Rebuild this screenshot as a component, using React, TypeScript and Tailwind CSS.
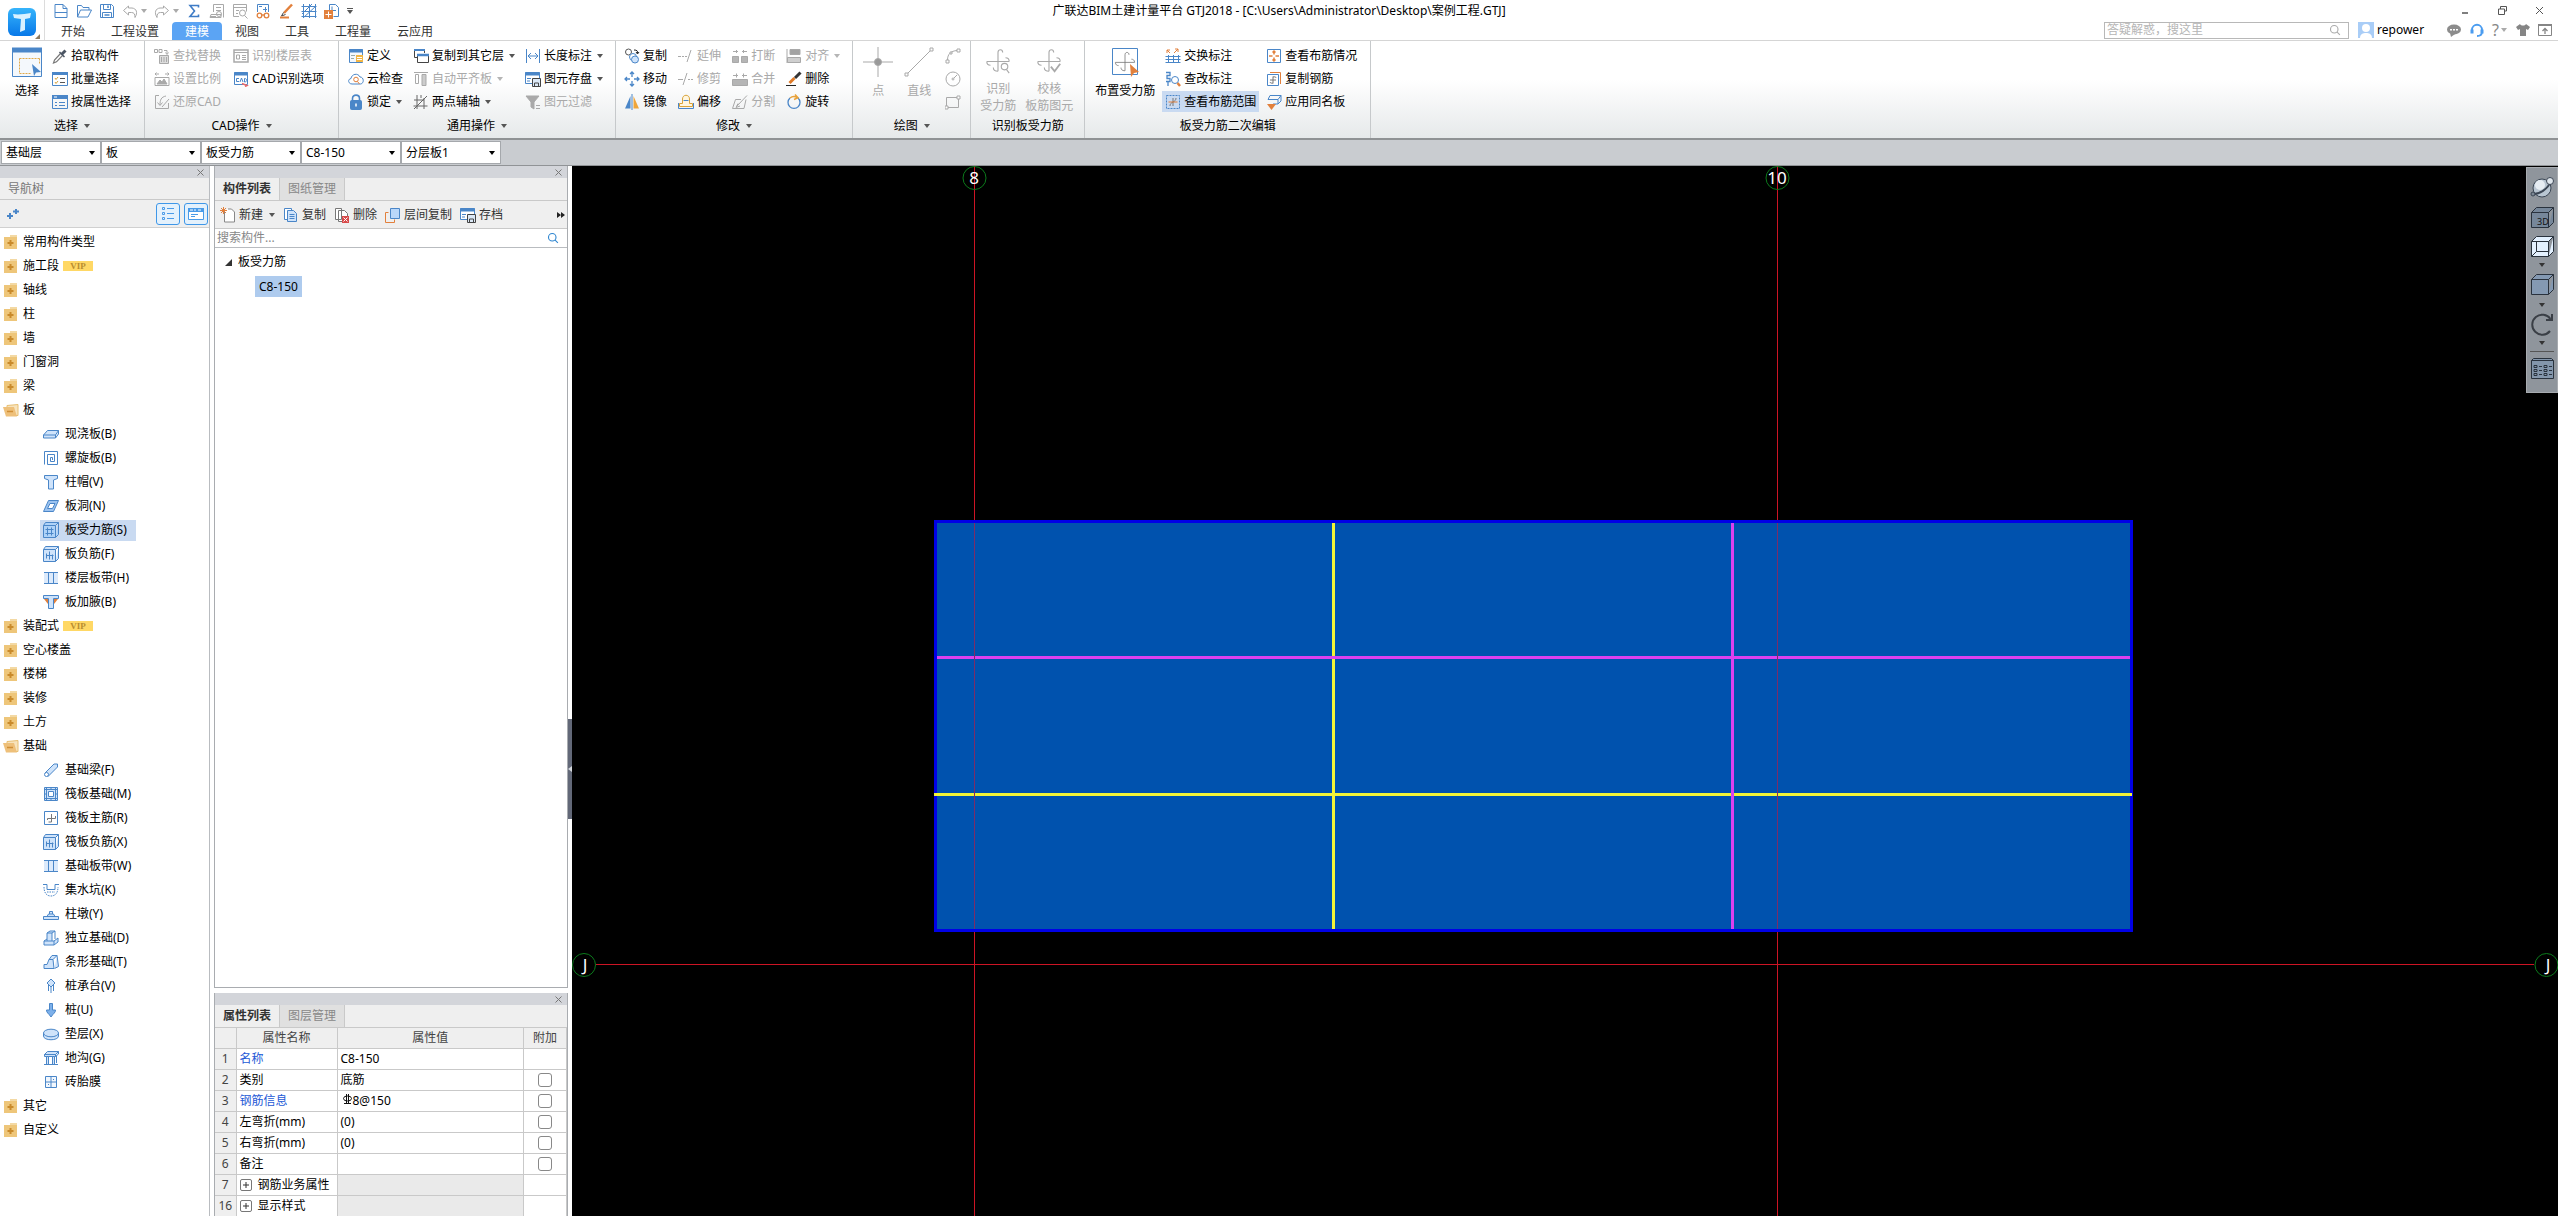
import React from 'react';
import clsx from 'clsx';

const B = '#4a86c8';
const L = '#cfe3fa';
const G = '#a9a9a9';
const O = '#e2803c';
const D = '#444444';

// All small glyphs are drawn on a 16x16 grid
const icons: Record<string, React.ReactNode> = {
  newFile: (
    <g stroke={B}>
      <path d="M2 1.5h8l4 4v9H2zM10 1.5v4h4M2 9.5h12" />
    </g>
  ),
  open: (
    <g stroke={B}>
      <path d="M1.5 14V2.5h4l1.500 2h6v2.500M1.500 14l3-7h11l-3.500 7z" />
    </g>
  ),
  save: (
    <g stroke={B}>
      <path d="M1.500 1.500h11l2 2v11h-13zM4.500 1.500v5h7v-5M3.500 14.500v-5h9v5" />
      <path d="M9 2.500v2.500M5.500 12h5" strokeWidth="1.500" />
    </g>
  ),
  undo: <path stroke={G} d="M6.500 3L1.500 7.500l5 4.500V9.500h3c2.500 0 3.500 1.500 3.500 5 3-5 1.500-9-3-9.500H6.500z" />,
  redo: <path stroke={G} d="M9.500 3l5 4.500-5 4.500V9.500h-3C4 9.500 3 11 3 14.500 0 9.500 1.500 5.500 6 5h3.500z" />,
  sum: <path stroke="#3f7cc6" strokeWidth="1.600" d="M12.500 4.500V2.500H4l4.500 5.500L4 13.500h8.500v-2" />,
  sheetFind: (
    <g stroke={G}>
      <path d="M4.500 9V1.500h10v13M1 13.500h6M7 4.500h5M7 7.500h5M2 11.500h10v3H1z" />
      <circle cx="10" cy="11" r="2.500" />
    </g>
  ),
  tableFind: (
    <g stroke={G}>
      <path d="M7 13.500H1.500v-12h13v7M1.500 4.500h13M4 7.500h3M4 10.500h2" />
      <circle cx="10.500" cy="10" r="3" />
      <path d="M12.500 12.500l3 3" />
    </g>
  ),
  glasses: (
    <g>
      <path stroke={B} d="M2.500 9V1.500h11V9M4 3.500h3M8 6.500h4M10.500 4v5" />
      <g stroke={O} strokeWidth="1.300">
        <circle cx="4.500" cy="12.500" r="2.300" />
        <circle cx="11.500" cy="12.500" r="2.300" />
        <path d="M6.500 12h3" />
      </g>
    </g>
  ),
  pen: (
    <g>
      <path stroke={O} strokeWidth="2.500" d="M14 1.500L6 10" />
      <path stroke={D} d="M5.500 9.500L3.500 13l4-1.500" />
      <path stroke={O} strokeWidth="2" d="M2 14.500h9" />
    </g>
  ),
  hatch: <path stroke={B} d="M2.500 1v14M8.500 1v14M14.500 1v14M.5 3.500h15M.5 13.500h15M1 11L11 1M2 15L15 3M.5 8.500h15" />,
  sheetAdd: (
    <g>
      <path stroke={B} d="M5.500 7V1.500h6l3 3v9H9.500M8 3.500v4h4" />
      <path fill={O} stroke="none" d="M0 7h9v9H0z" />
      <path stroke="#fff" d="M4.500 8.500v6M1.500 11.500h6" />
    </g>
  ),
  dropper: (
    <g>
      <path stroke="#777" strokeWidth="1.200" d="M8.500 5.500L2.500 12l-1 3 3-1.200 6-6.300" />
      <path stroke="#4b5563" strokeWidth="3" d="M9.500 6.500l4-4" />
      <path stroke="#4b5563" strokeWidth="1.500" d="M7.500 4l5 5" />
    </g>
  ),
  listSelect: (
    <g>
      <path stroke={B} d="M.5 2.500h15v12H.5z" />
      <path stroke={B} strokeWidth="3" d="M0 2.500h16" />
      <path stroke="#d7a33a" d="M3 7l1 1.500L6 6M3 11l1 1.500L6 10" />
      <path stroke="#555" d="M8 7.500h5M8 11.500h5" />
    </g>
  ),
  propSelect: (
    <g>
      <path stroke={B} d="M.5 2.500h15v12H.5z" />
      <path stroke={B} strokeWidth="4" d="M0 3h16" />
      <path stroke="#fff" d="M2 3h3" />
      <path stroke={B} d="M3 8.500h2M7 8.500h6M3 11.500h2M7 11.500h6" />
    </g>
  ),
  findReplace: (
    <g stroke={G}>
      <path d="M.5 1.500h3v3h-3zM5 1.500h3v3H5zM10 2.500h3v3M11.500 4.500l1.500 2 1.500-2" />
      <path fill="#dcdcdc" d="M5.500 7.500h9v8h-9z" />
      <path d="M7.500 9v5M10 9v5M12.500 9v5" />
    </g>
  ),
  scale: (
    <g stroke={G}>
      <path d="M1 3h4M2.500 1.500L1 3l1.500 1.500M15 3h-4M13.500 1.500L15 3l-1.500 1.500M1 6.500h14v8H1z" />
      <path fill={G} d="M3 13l3-4 2 2 2-3 3 5z" />
    </g>
  ),
  restore: (
    <g stroke={G}>
      <path d="M5 1.500H1.500v13h13V9M12 2C7 3 6 6 6 11M3.500 8.500L6 11.500l2.500-3M15 5L8 13" />
    </g>
  ),
  floorTable: (
    <g stroke={G}>
      <path strokeWidth="1.500" d="M1 2h14v12H1z" />
      <path d="M1 4.500h14M3.500 7h3v4h-3zM9 7.500h4M9 9.500h4M9 11.500h4" />
    </g>
  ),
  cadOption: (
    <g>
      <path stroke={B} d="M1.500 1.500h13v12h-13z" />
      <path stroke={B} strokeWidth="3" d="M1 3h14" />
      <path stroke={B} d="M6 7.500H3.500v3H6M7 11l1.500-4 1.500 4M11.500 7.500v3.500c3 0 3-3.500 0-3.500" />
      <path stroke="#e86a6a" strokeWidth="1.500" d="M9 12.500l5 2-2 1" />
    </g>
  ),
  define: (
    <g>
      <path stroke={B} fill="#f5f8fc" d="M1.500 1.500h13v13h-13z" />
      <path stroke={B} strokeWidth="3" d="M1 3h14" />
      <path stroke="#9aa" d="M3 7.500h4M3 10.500h3" />
      <path fill="#f2b544" stroke="none" d="M8 7h7v7H8z" />
      <path stroke="#fff" d="M9 9.500h5M9 11.500h5" />
    </g>
  ),
  cloudCheck: (
    <g>
      <path stroke={B} d="M4 13C0 13-.5 8 3 7.500 3.500 3 10 1.500 12 6c4 0 4.500 6.500.5 7z" />
      <circle cx="8" cy="8.500" r="2.300" stroke={O} />
      <path stroke={O} d="M9.500 10.500l2 2.500" />
    </g>
  ),
  lock: (
    <g>
      <path stroke={B} strokeWidth="1.600" d="M4.500 7V4.500C4.500 0 11.500 0 11.500 4.500V7" />
      <rect x="2.500" y="6.500" width="11" height="9" rx="1" fill={B} stroke={B} />
      <path stroke="#fff" strokeWidth="1.500" d="M8 9.500v3" />
    </g>
  ),
  copyFloor: (
    <g>
      <path stroke={D} d="M5 9.500H1.500v-8h10V5" />
      <path stroke={B} strokeWidth="2" d="M1 2h11" />
      <path stroke={D} fill="#fff" d="M4.500 6.500h11v8h-11z" />
      <path stroke={B} strokeWidth="2.500" d="M4 7h12" />
    </g>
  ),
  autoAlign: (
    <g stroke={G}>
      <path d="M1 1.500h14M2.500 3.500h3v9h-3z" />
      <path fill="#ccc" d="M9 3.500h4v11H9z" />
    </g>
  ),
  twoPoint: <path stroke="#666" d="M4 1v14M.5 12h14M1 15L14 2M11 4v11M1 6h10M8 1v3" />,
  length: <path stroke={B} d="M1.500 1v14M14.500 1v14M3 8h10M6 5L3 8l3 3M10 5l3 3-3 3" />,
  store: (
    <g>
      <path stroke={B} fill="#fff" d="M.5 1.500h14v11H.5z" />
      <path stroke={B} strokeWidth="3" d="M0 3h15" />
      <path stroke={B} d="M2 7.500h4M2 10h3" />
      <path stroke={D} fill="#dbe8f6" d="M7.500 7.500h8v8h-8zM9.500 15v-3h4v3" />
    </g>
  ),
  filter: (
    <g stroke={G}>
      <path fill={G} d="M1 2h13L9 8v7l-3-2V8z" />
      <path d="M11 11.500h4M11 14.500h4" />
    </g>
  ),
  copy: (
    <g>
      <circle cx="4.500" cy="4" r="3" stroke="#555" />
      <circle cx="9" cy="9" r="3.500" stroke={B} fill="#fff" />
      <circle cx="11" cy="11.500" r="3.500" stroke={B} fill={L} />
      <path stroke="#222" d="M10 2c3 0 4 1 3.500 3.500M12 4l1.500 2L15 4" />
    </g>
  ),
  move: (
    <path
      stroke={B}
      strokeWidth="1.300"
      d="M8 1v5M8 10v5M1 8h5M10 8h5M6 3l2-2 2 2M6 13l2 2 2-2M3 6L1 8l2 2M13 6l2 2-2 2"
    />
  ),
  mirror: (
    <g stroke="none">
      <path fill={B} d="M6.500 2v12.500H1z" />
      <path fill="#f0a63a" d="M9.500 2v12.500H15z" />
      <path stroke={B} d="M8 0v16" />
    </g>
  ),
  extend: <path stroke={G} d="M0 8.500h3M4 8.500h2M7 8.500h2M9 14l4-12" />,
  trim: <path stroke={G} d="M0 8.500h5M5 14l4-12M10 8.500h2M13 8.500h2" />,
  offset: (
    <g>
      <path stroke="#d9a33a" fill="#fff6df" d="M4.500 9.500V5c0-5 7-5 7 0v4.500h3v3h-13v-3z" />
      <path stroke={B} d="M.5 9v5.500h15V9M5.500 6.500h5" />
    </g>
  ),
  breakIt: (
    <g stroke={G}>
      <path fill="#b5b5b5" d="M.5 8.500h6v6h-6zM9.500 8.500h6v6h-6z" />
      <path d="M1 3.500h5M4.500 2v3M10 3.500h5M11.500 2v3" />
    </g>
  ),
  merge: (
    <g stroke={G}>
      <path fill="#b5b5b5" d="M.5 8.500h15v6H.5z" />
      <path d="M1 4.500h5M4.500 2.500v4M10 4.500h5M11.500 2.500v4" />
    </g>
  ),
  split: <path stroke={G} d="M9 5.500H3.500L.5 14.500H12l2-9M15 1.500L5 12M6 9.500l-2 4 4-1.500" />,
  align: (
    <g stroke={G}>
      <path fill="#a3a3a3" d="M4 1.500h10v5H4z" />
      <path fill="#cfcfcf" d="M1.500 9.500h13v5h-13zM1 1v14" />
    </g>
  ),
  erase: (
    <g>
      <path stroke="#222" d="M0 14.500h10" />
      <path stroke="#e07b28" strokeWidth="3" d="M3.500 12l5-5" />
      <path stroke="#333" strokeWidth="3" d="M9 7l5.500-5.500" />
    </g>
  ),
  rotate: (
    <g>
      <path stroke={B} strokeWidth="1.300" d="M12 4a6 6 0 11-8 0" />
      <path stroke="#e8a23a" strokeWidth="1.500" d="M4 4a6 6 0 017-.5M9 .5l3 3.200L8 5.500" />
    </g>
  ),
  arc: (
    <g stroke={G}>
      <path d="M2.500 12C2.500 6 6 3 12 2.500" />
      <path fill="#fff" d="M1 12h3v3H1zM12 1h3v3h-3zM5 4h2v2H5z" />
    </g>
  ),
  circle: (
    <g stroke={G}>
      <circle cx="8" cy="8" r="7" />
      <circle cx="8" cy="8" r="1" />
      <path d="M9 7l3-3" />
    </g>
  ),
  rect: (
    <g stroke={G}>
      <path d="M1.500 3.500h12v10h-12z" />
      <path fill="#fff" d="M12 2h3v3h-3zM0 12h3v3H0z" />
    </g>
  ),
  swapMark: (
    <g>
      <path stroke={O} d="M2 5V2h3M2 2l3 3M9 5l4-4M13 4V1h-3" />
      <path stroke={B} d="M.5 8.500h15M3.500 7v8M8.500 7v8M13.500 7v8M.5 11.500h15M.5 14.500h15" />
    </g>
  ),
  editMark: (
    <g>
      <path stroke={B} strokeWidth="1.300" d="M1 1.500h4v3H2v3h3v3H1M3 11v4" />
      <circle cx="10" cy="9" r="3.500" stroke={B} />
      <path stroke={O} strokeWidth="2.500" d="M12.500 12l2.500 3" />
    </g>
  ),
  range: (
    <g>
      <path stroke={B} strokeDasharray="2 1" d="M1.500 1.500h13v13h-13z" />
      <path stroke="#777" d="M8 4v8M5 12c0-2 1-3 3-4M11 4c0 2-1 3-3 4" />
      <path stroke={O} d="M3.500 8h9" />
    </g>
  ),
  viewBars: (
    <g>
      <path stroke={B} fill="#fff" d="M1.500 1.500h13v13h-13z" />
      <path stroke={O} strokeWidth="1.500" d="M8 3v3.500M8 9.500V13M3 8h3.500M9.500 8H13M6.500 4.500L8 3l1.500 1.500M6.500 11.500L8 13l1.500-1.500" />
    </g>
  ),
  copyBars: (
    <g>
      <path stroke={O} d="M4 1.500h10.500V13" />
      <path stroke={B} fill="#fff" d="M1.500 3.500h11v11h-11z" />
      <path stroke="#777" d="M7 5.500v7M4 9h6M4 11c0 1 2 1.500 3 1M10 7c0-1-1-1.500-3-1" />
    </g>
  ),
  sameName: (
    <g>
      <path stroke={B} d="M4 1.500h11l-3 4H2zM12 5.500V10H7M15 1.500V7l-3 3" />
      <path fill={O} stroke="none" d="M1 10h9l-4.500 6z" />
    </g>
  ),
  // navigation tree
  folder: (
    <g stroke="none">
      <path fill="#f3d9a4" d="M7 1h7v3H7z" />
      <path fill="#eec67a" d="M1 3h13v12H1z" />
      <path stroke="#c98a2b" strokeWidth="2" d="M7.500 6v6M4.500 9h6" />
    </g>
  ),
  folderOpen: (
    <g stroke="none">
      <path fill="#f7e3bc" stroke="#e8bf72" d="M4 3.500l11-1v11H4z" />
      <path fill="#eec07a" d="M0 5h11l3 9.500H3z" />
      <path stroke="#d08f36" strokeWidth="1.500" d="M4 9.500h6" />
    </g>
  ),
  slab: <path stroke={B} fill={L} d="M4.500 4.500h11l-3 4.500H.5zM.5 9v3h12V9M12.500 12l3-4V4.500" />,
  spiral: <path stroke={B} d="M1.500 14.500v-13h13v13H4.500v-10h7v7h-4v-4H9.500V10" />,
  cap: <path stroke={B} fill={L} d="M1.500 1.500h13v3l-4 1.500v9h-5V6l-4-1.500z" />,
  hole: (
    <g stroke={B}>
      <path fill="#9cc3f0" d="M5.500 2.500h10l-5 11h-10z" />
      <path fill="#fff" d="M7 5.500h5l-2.500 5H4.500z" />
    </g>
  ),
  mainBar: (
    <g stroke={B}>
      <path fill="#aed2f8" d="M.5 3.500h12v12H.5zM.5 3.500l2-3h13l-3 3M15.500.5v12l-3 3" />
      <path d="M2.500 7.500h8M2.500 11.500h8M4.500 5.500v8M8.500 5.500v8" />
    </g>
  ),
  negBar: (
    <g stroke={B}>
      <path fill={L} d="M.5 3.500h12v12H.5zM.5 3.500l2-3h13l-3 3M15.500.5v12l-3 3" />
      <path d="M3.500 7.500v5M6.500 5.500v8M3.500 9.500h7M9.500 8.500v5" />
    </g>
  ),
  strip: (
    <g>
      <path fill="#dceafb" stroke="none" d="M1 2h14v12H1z" />
      <path stroke={B} d="M1 2.500h14M1 13.500h14M5.500 3v10M10.500 3v10" />
    </g>
  ),
  haunch: (
    <g>
      <path fill={O} stroke="none" d="M1 5h14l-4 5H5z" />
      <path stroke={B} fill={L} d="M.5 1.500h15v3h-5v10h-5v-10h-5z" />
    </g>
  ),
  beam: (
    <g stroke={B}>
      <path fill={L} d="M2 11l9-9h3.500v3L5 14.500z" />
      <circle cx="3.500" cy="12.500" r="2" fill="#fff" />
    </g>
  ),
  raft: (
    <g stroke={B}>
      <path fill={L} d="M1.500 1.500h13v13h-13z" />
      <path fill="#fff" d="M5.500 5.500h5v5h-5z" />
      <path d="M3.500 1.500v13M12.500 1.500v13M1.500 3.500h13M1.500 12.500h13M8 1.500v2M8 12.500v2M1.500 8h2M12.500 8h2" />
    </g>
  ),
  raftMain: (
    <g>
      <path stroke={B} fill="#fff" d="M1.500 1.500h13v13h-13z" />
      <path stroke="#777" d="M8.500 4v8h-3M4.500 10V8.500h8V6" />
    </g>
  ),
  pit: (
    <g stroke={B}>
      <path d="M0 2.500h4v5h8v-5h4" />
      <path strokeDasharray="1.500 1" d="M1 5c0 5 2 9 7 9s7-4 7-9M4 10h8" />
    </g>
  ),
  pier: <path stroke={B} fill={L} d="M.5 10.500h15v3H.5zM4 10.500L5.500 8h5l1.500 2.500M6.500 8V5.500h3V8" />,
  isolated: <path stroke={B} fill={L} d="M1 11h10v4H1zM1 11l3-2M11 11l4-3v4l-4 3M4 11V3h5v8M4 3l3-2h5L9 3M12 1v8" />,
  stripBase: <path stroke={B} fill={L} d="M1 14.500v-4h3l2-5h4l1 9zM6 5.500l3-4h5l-4 4M14 1.500l1.500 11-4 2" />,
  pileCap: (
    <g stroke={B}>
      <path fill={L} d="M8 1l4 4-4 4-4-4z" />
      <path d="M5.500 7v6M8 9v6M10.500 7v6" />
    </g>
  ),
  pile: <path stroke={B} fill="#7db0ea" d="M6.500 1.500h3V8h3c0 3-2 3-4.500 7-2.500-4-4.500-4-4.500-7h3z" />,
  cushion: (
    <g stroke={B} fill={L}>
      <path d="M.5 7v3c0 5 15 5 15 0V7" />
      <ellipse cx="8" cy="7" rx="7.500" ry="3.800" />
    </g>
  ),
  trench: (
    <g stroke={B} fill={L}>
      <path d="M1.500 4.500l3-3h11l-3 3zM1.500 4.500h11v2h-11zM15.500 1.500V4l-3 2.500" />
      <path d="M3.500 6.500h2v8h-2zM9.500 6.500h2v8h-2zM1 14.500h14M13.500 6v7" />
    </g>
  ),
  brick: <path stroke={B} fill="#f2f7fd" d="M2.500 2.500h11v11h-11zM8 2.500v11M2.500 8h11M5 10.500h1M10 5.500h1" />,
  // component list toolbar
  create: (
    <g>
      <path stroke="#888" fill="#fff" d="M4.500 3.500V15h10V5l-3-3H8" />
      <path stroke={O} d="M1 1l5 5M6 1L1 6M3.500 0v7M0 3.500h7" />
    </g>
  ),
  docCopy: (
    <g stroke={B}>
      <path fill="#fff" d="M1.500 1.500h7v11h-7z" />
      <path fill={L} d="M4.500 3.500h6l3 3v8h-9z" />
      <path d="M6.500 7.500h5M6.500 9.500h5M6.500 11.500h5" />
    </g>
  ),
  docDelete: (
    <g>
      <path stroke="#777" fill="#fff" d="M1.500 1.500h6v11h-6zM4.500 3.500h6l3 3v8h-9z" />
      <path fill="#d84a4a" stroke="none" d="M8 9h7v7H8z" />
      <path stroke="#fff" d="M9.500 10.500l4 4M13.500 10.500l-4 4" />
    </g>
  ),
  layerCopy: (
    <g>
      <path stroke={O} d="M3.500 5.500H.5v10h9v-3" />
      <path stroke={B} fill="#b9d7fa" d="M5.500 1.500h9v10h-9z" />
    </g>
  ),
  search: (
    <g strokeWidth="1.500">
      <circle cx="7" cy="7" r="5" />
      <path d="M10.500 10.500l4 4" />
    </g>
  ),
};

const Icon = ({ name, className = 'w-4 h-4' }: { name: string; className?: string }) => (
  <svg viewBox="0 0 16 16" fill="none" stroke="currentColor" className={clsx('shrink-0', className)}>
    {icons[name]}
  </svg>
);

const Caret = ({ className = 'text-[#555]' }: { className?: string }) => (
  <svg viewBox="0 0 6 4" className={clsx('w-[6px] h-[4px] shrink-0', className)} fill="currentColor">
    <path d="M0 0h6L3 4z" />
  </svg>
);

interface Tool {
  icon: string;
  label: string;
  disabled?: boolean;
  caret?: boolean;
  active?: boolean;
}

const ToolButton = ({ icon, label, disabled, caret, active }: Tool) => (
  <button
    type="button"
    disabled={disabled}
    className={clsx(
      'flex items-center gap-[3px] whitespace-nowrap',
      disabled ? 'text-[#a9a9a9]' : 'text-black',
      active ? 'h-[15px] my-1 bg-[#c9daf1] outline-3 outline-[#c9daf1]' : 'h-[19px] my-[2px]'
    )}
  >
    <Icon name={icon} />
    <span>{label}</span>
    {caret && <Caret className={clsx('ml-[2px]', disabled ? 'text-[#b5b5b5]' : 'text-[#555]')} />}
  </button>
);

const Column = ({ tools }: { tools: Tool[] }) => (
  <div className="flex flex-col items-start">
    {tools.map((tool) => (
      <ToolButton key={tool.label} {...tool} />
    ))}
  </div>
);

interface GroupProps {
  title: string;
  caret?: boolean;
  className?: string;
  children: React.ReactNode;
}

const Group = ({ title, caret, className, children }: GroupProps) => (
  <section className="flex flex-col border-r border-[#c6c9cb] pt-[3px]">
    <div className={clsx('flex h-[70px]', className)}>{children}</div>
    <div className="flex flex-1 items-center justify-center gap-[6px]">
      <span>{title}</span>
      {caret && <Caret />}
    </div>
  </section>
);

const BigButton = ({ icon, lines, disabled, className }: { icon: React.ReactNode; lines: string[]; disabled?: boolean; className?: string }) => (
  <button
    type="button"
    disabled={disabled}
    className={clsx('flex flex-col items-center whitespace-nowrap pt-[3px] gap-[5px]', disabled ? 'text-[#a9a9a9]' : 'text-black', className)}
  >
    <svg viewBox="0 0 30 30" className="w-[30px] h-[30px]" fill="none">
      {icon}
    </svg>
    <span className="flex flex-col items-center leading-[17px]">
      {lines.map((line) => (
        <span key={line}>{line}</span>
      ))}
    </span>
  </button>
);

const hookPath = 'M15 26V6c0-4 5-4 5 0M3 15.500h24M15 26c-4 0-5-2-5-4M3 15.500c0 3 2 4 4 4M27 15.500c0-3-2-4-4-4';

const menuTabs = ['开始', '工程设置', '建模', '视图', '工具', '工程量', '云应用'];

const Header = () => (
  <header className="grid grid-cols-[1fr_auto_1fr] h-[41px] border-b border-[#d5d5d5] bg-white">
    <div className="flex">
      <div className="relative w-[45px] pl-2 pt-2 border-r border-[#dcdcdc]">
        <svg viewBox="0 0 28 28" className="w-7 h-7">
          <defs>
            <linearGradient id="logo" x1="0" y1="0" x2="0" y2="1">
              <stop offset="0" stopColor="#36b4fb" />
              <stop offset="1" stopColor="#0878e8" />
            </linearGradient>
          </defs>
          <rect width="28" height="28" rx="6" fill="url(#logo)" />
          <path d="M5 6c5 1 12 0 18-1l-1 5-5 1v11l-5 2 1-13-7-1z" fill="#d9f1ff" />
        </svg>
        <svg viewBox="0 0 5 5" className="absolute right-1 bottom-px w-[5px] h-[5px]">
          <path d="M5 0v5H0z" fill="#8d7a60" />
        </svg>
      </div>
      <div className="flex flex-col">
        <div className="flex items-center h-[22px] pl-2 gap-[7px]">
          <Icon name="newFile" />
          <Icon name="open" />
          <Icon name="save" />
          <Icon name="undo" />
          <Caret className="-ml-1 text-[#aaa]" />
          <Icon name="redo" />
          <Caret className="-ml-1 text-[#aaa]" />
          <Icon name="sum" />
          <Icon name="sheetFind" />
          <Icon name="tableFind" />
          <Icon name="glasses" />
          <Icon name="pen" />
          <Icon name="hatch" />
          <Icon name="sheetAdd" />
          <span className="flex flex-col items-center gap-px">
            <span className="w-[6px] h-px bg-[#555]" />
            <Caret />
          </span>
        </div>
        <nav className="flex pl-[3px] text-[#333]">
          {menuTabs.map((tab) => (
            <button
              key={tab}
              type="button"
              className={clsx('h-[18px] px-[13px] leading-[19px] whitespace-nowrap', tab === '建模' && 'bg-[#5ba4f4] text-white rounded-t-sm')}
            >
              {tab}
            </button>
          ))}
        </nav>
      </div>
    </div>

    <h1 className="h-[22px] leading-[22px] whitespace-nowrap">
      广联达BIM土建计量平台 GTJ2018 - [C:\Users\Administrator\Desktop\案例工程.GTJ]
    </h1>

    <div className="flex flex-col items-end">
      <div className="flex h-[20px] items-center gap-7 pr-[14px] text-[#555]">
        <button type="button" aria-label="最小化">
          <svg viewBox="0 0 9 9" className="w-[9px] h-[9px]" stroke="currentColor"><path d="M1 7h6" strokeWidth="1.500" /></svg>
        </button>
        <button type="button" aria-label="还原">
          <svg viewBox="0 0 9 9" className="w-[9px] h-[9px]" stroke="currentColor" fill="none"><path d="M2.500 3V.5h6V5H7M.5 3h6v5.500h-6z" /></svg>
        </button>
        <button type="button" aria-label="关闭">
          <svg viewBox="0 0 9 9" className="w-[9px] h-[9px]" stroke="currentColor"><path d="M1 1l7 7M8 1L1 8" /></svg>
        </button>
      </div>
      <div className="flex h-[20px] items-center pr-[6px] text-[#888]">
        <label className="flex items-center w-[245px] h-[17px] border border-[#b8b8b8] pl-[2px] pr-[7px] mr-[9px]">
          <input aria-label="搜索帮助" placeholder="答疑解惑，搜这里" className="flex-1 min-w-0 outline-none placeholder:text-[#b5b5b5]" />
          <Icon name="search" className="w-3 h-3 text-[#aaa]" />
        </label>
        <svg viewBox="0 0 16 16" className="w-4 h-4">
          <path fill="#a9cdf7" d="M0 0h16v16H0z" />
          <circle cx="8" cy="6" r="4" fill="#fff" />
          <path fill="#fff" d="M2 16c0-4 3-5 6-5s6 1 6 5z" />
        </svg>
        <span className="w-[73px] pl-[3px] text-black">repower</span>
        <svg viewBox="0 0 14 14" className="w-[14px] h-[14px]" fill="#8c8c8c">
          <ellipse cx="7" cy="6.500" rx="7" ry="5" />
          <path d="M3 10l1 4 4-3z" />
          <path d="M3 6h2v1.500H3zM6 6h2v1.500H6zM9 6h2v1.500H9z" fill="#fff" />
        </svg>
        <svg viewBox="0 0 14 14" className="w-[14px] h-[14px] ml-[9px]" fill="none" stroke="#4a9cf0" strokeWidth="1.800">
          <path d="M2 9V7C2 0 12 0 12 7v2M7 13c3 0 5-1 5-4" />
          <path d="M2 6.500v4M12 6.500v4" strokeWidth="3" />
        </svg>
        <span className="ml-2 text-base leading-4">?</span>
        <Caret className="ml-[2px] text-[#aaa]" />
        <svg viewBox="0 0 14 14" className="w-[14px] h-[14px] ml-[9px]" fill="#858585">
          <path d="M4 1c1 2 5 2 6 0l4 3-2 3-2-1v7H4V6L2 7 0 4z" />
        </svg>
        <svg viewBox="0 0 14 14" className="w-[14px] h-[14px] ml-2" fill="none" stroke="#858585">
          <path d="M.5 1.500h13v11H.5z" />
          <path d="M0 2h14" strokeWidth="2" />
          <path d="M7 11V6M4.500 8L7 5.500 9.500 8" strokeWidth="1.300" />
        </svg>
      </div>
    </div>
  </header>
);

const Ribbon = () => (
  <div className="flex h-[99px] bg-linear-to-b from-white from-40% to-[#e6e9ea] border-b-2 border-[#8f9294]">
    <Group title="选择" caret className="pl-2 pr-[13px]">
      <BigButton
        className="w-[38px] mr-[6px]"
        lines={['选择']}
        icon={
          <g>
            <path d="M.5 1.500h29v28H.5z" fill="#f4f8fc" stroke={B} />
            <path d="M0 3h30" stroke={B} strokeWidth="5" />
            <path d="M7.500 11.500h20M7.500 11.500v15h12M27.500 11.500v6" stroke="#e0a94a" strokeDasharray="2 1" />
            <path d="M20 17l9 8-5 .5-2 3.500z" fill={B} />
          </g>
        }
      />
      <Column
        tools={[
          { icon: 'dropper', label: '拾取构件' },
          { icon: 'listSelect', label: '批量选择' },
          { icon: 'propSelect', label: '按属性选择' },
        ]}
      />
    </Group>

    <Group title="CAD操作" caret className="pl-[9px] pr-[14px] gap-3">
      <Column
        tools={[
          { icon: 'findReplace', label: '查找替换', disabled: true },
          { icon: 'scale', label: '设置比例', disabled: true },
          { icon: 'restore', label: '还原CAD', disabled: true },
        ]}
      />
      <Column
        tools={[
          { icon: 'floorTable', label: '识别楼层表', disabled: true },
          { icon: 'cadOption', label: 'CAD识别选项' },
        ]}
      />
    </Group>

    <Group title="通用操作" caret className="pl-[9px] pr-3 gap-[10px]">
      <Column
        tools={[
          { icon: 'define', label: '定义' },
          { icon: 'cloudCheck', label: '云检查' },
          { icon: 'lock', label: '锁定', caret: true },
        ]}
      />
      <Column
        tools={[
          { icon: 'copyFloor', label: '复制到其它层', caret: true },
          { icon: 'autoAlign', label: '自动平齐板', disabled: true, caret: true },
          { icon: 'twoPoint', label: '两点辅轴', caret: true },
        ]}
      />
      <Column
        tools={[
          { icon: 'length', label: '长度标注', caret: true },
          { icon: 'store', label: '图元存盘', caret: true },
          { icon: 'filter', label: '图元过滤', disabled: true },
        ]}
      />
    </Group>

    <Group title="修改" caret className="pl-2 pr-3 gap-[11px]">
      <Column
        tools={[
          { icon: 'copy', label: '复制' },
          { icon: 'move', label: '移动' },
          { icon: 'mirror', label: '镜像' },
        ]}
      />
      <Column
        tools={[
          { icon: 'extend', label: '延伸', disabled: true },
          { icon: 'trim', label: '修剪', disabled: true },
          { icon: 'offset', label: '偏移' },
        ]}
      />
      <Column
        tools={[
          { icon: 'breakIt', label: '打断', disabled: true },
          { icon: 'merge', label: '合并', disabled: true },
          { icon: 'split', label: '分割', disabled: true },
        ]}
      />
      <Column
        tools={[
          { icon: 'align', label: '对齐', disabled: true, caret: true },
          { icon: 'erase', label: '删除' },
          { icon: 'rotate', label: '旋转' },
        ]}
      />
    </Group>

    <Group title="绘图" caret className="pl-[10px] pr-[9px] gap-[11px]">
      <BigButton
        disabled
        lines={['点']}
        icon={
          <g stroke={G}>
            <path d="M15 0v30M0 15h30" />
            <circle cx="15" cy="15" r="3.500" fill="#999" />
          </g>
        }
      />
      <BigButton
        disabled
        lines={['直线']}
        icon={
          <g stroke={G}>
            <path d="M3 27L27 3" />
            <path d="M1 26h3v3H1zM26 1h3v3h-3z" fill="#fff" />
          </g>
        }
      />
      <div className="flex flex-col gap-[7px] pt-[4px]">
        {['arc', 'circle', 'rect'].map((shape) => (
          <button key={shape} type="button" disabled aria-label={shape}>
            <Icon name={shape} className="block w-4 h-4" />
          </button>
        ))}
      </div>
    </Group>

    <Group title="识别板受力筋" className="pl-[9px] pr-[11px] gap-[9px]">
      <BigButton
        disabled
        lines={['识别', '受力筋']}
        icon={
          <g stroke={G} strokeWidth="1.200">
            <path d={hookPath} />
            <circle cx="22" cy="21" r="3.500" fill="#fff" />
            <path d="M24 24l3 4" />
          </g>
        }
      />
      <BigButton
        disabled
        lines={['校核', '板筋图元']}
        icon={
          <g stroke={G} strokeWidth="1.200">
            <path d={hookPath} />
            <path d="M17 21l4 5 6-8" strokeWidth="2" />
          </g>
        }
      />
    </Group>

    <Group title="板受力筋二次编辑" className="pl-[10px] pr-[13px] gap-[10px]">
      <BigButton
        lines={['布置受力筋']}
        icon={
          <g>
            <path d="M2.500 1.500h25v26h-25z" fill="#fff" stroke={B} />
            <path d={hookPath} stroke="#777" transform="translate(3 3) scale(.8)" />
            <path d="M20 17l9 8-5 1-3 4z" fill={O} />
          </g>
        }
      />
      <Column
        tools={[
          { icon: 'swapMark', label: '交换标注' },
          { icon: 'editMark', label: '查改标注' },
          { icon: 'range', label: '查看布筋范围', active: true },
        ]}
      />
      <Column
        tools={[
          { icon: 'viewBars', label: '查看布筋情况' },
          { icon: 'copyBars', label: '复制钢筋' },
          { icon: 'sameName', label: '应用同名板' },
        ]}
      />
    </Group>
  </div>
);

const selectors = [
  { name: '楼层', value: '基础层' },
  { name: '构件大类', value: '板' },
  { name: '构件类型', value: '板受力筋' },
  { name: '构件', value: 'C8-150' },
  { name: '分层', value: '分层板1' },
];

const SelectorBar = () => (
  <div className="flex h-[26px] items-center bg-[#c9ccd0] border-b border-[#909396] pl-px">
    {selectors.map(({ name, value }) => (
      <label key={name} className="relative w-[100px]">
        <select aria-label={name} className="appearance-none block w-full h-[23px] pl-1 bg-white border border-[#a5a8ac] outline-none">
          <option>{value}</option>
        </select>
        <Caret className="absolute right-[6px] top-[10px] pointer-events-none" />
      </label>
    ))}
  </div>
);

const CloseBar = () => (
  <div className="flex justify-end items-center h-3 shrink-0 pr-[5px] bg-[#d3d5da]">
    <button type="button" aria-label="关闭面板">
      <svg viewBox="0 0 7 7" className="block w-[7px] h-[7px]" stroke="#777"><path d="M.5.5l6 6M6.500.5l-6 6" /></svg>
    </button>
  </div>
);

interface TreeNode {
  label: string;
  icon?: string;
  vip?: boolean;
  children?: TreeNode[];
}

const tree: TreeNode[] = [
  { label: '常用构件类型' },
  { label: '施工段', vip: true },
  { label: '轴线' },
  { label: '柱' },
  { label: '墙' },
  { label: '门窗洞' },
  { label: '梁' },
  {
    label: '板',
    children: [
      { label: '现浇板(B)', icon: 'slab' },
      { label: '螺旋板(B)', icon: 'spiral' },
      { label: '柱帽(V)', icon: 'cap' },
      { label: '板洞(N)', icon: 'hole' },
      { label: '板受力筋(S)', icon: 'mainBar' },
      { label: '板负筋(F)', icon: 'negBar' },
      { label: '楼层板带(H)', icon: 'strip' },
      { label: '板加腋(B)', icon: 'haunch' },
    ],
  },
  { label: '装配式', vip: true },
  { label: '空心楼盖' },
  { label: '楼梯' },
  { label: '装修' },
  { label: '土方' },
  {
    label: '基础',
    children: [
      { label: '基础梁(F)', icon: 'beam' },
      { label: '筏板基础(M)', icon: 'raft' },
      { label: '筏板主筋(R)', icon: 'raftMain' },
      { label: '筏板负筋(X)', icon: 'negBar' },
      { label: '基础板带(W)', icon: 'strip' },
      { label: '集水坑(K)', icon: 'pit' },
      { label: '柱墩(Y)', icon: 'pier' },
      { label: '独立基础(D)', icon: 'isolated' },
      { label: '条形基础(T)', icon: 'stripBase' },
      { label: '桩承台(V)', icon: 'pileCap' },
      { label: '桩(U)', icon: 'pile' },
      { label: '垫层(X)', icon: 'cushion' },
      { label: '地沟(G)', icon: 'trench' },
      { label: '砖胎膜', icon: 'brick' },
    ],
  },
  { label: '其它' },
  { label: '自定义' },
];

const NavTree = () => (
  <aside className="flex flex-col w-[210px] shrink-0 border-r border-[#b9bcc0] bg-white">
    <CloseBar />
    <h2 className="h-[22px] leading-[22px] pl-2 bg-[#efefef] border-b border-[#c9c9c9] text-[#777]">导航树</h2>
    <div className="flex items-center h-7 pl-[6px] pr-px gap-1 bg-[#efefef] border-b border-[#d0d0d0]">
      <svg viewBox="0 0 14 12" className="w-[14px] h-3 mr-auto" stroke={B} strokeWidth="2">
        <path d="M4 5v6M1 8h6M10 1v5M7 3.500h6" />
      </svg>
      <button type="button" aria-label="列表视图" className="grid place-items-center w-6 h-[22px] rounded-[3px] border border-[#3f97e8] bg-[#e4f1fc]">
        <svg viewBox="0 0 14 14" className="w-[14px] h-[14px]" stroke="#4a9be8" fill="none">
          <path d="M1.500.5h2v2h-2zM1.500 5.500h2v2h-2zM1.500 10.500h2v2h-2zM6 1.500h7M6 6.500h7M6 11.500h7" />
        </svg>
      </button>
      <button type="button" aria-label="图标视图" className="grid place-items-center w-6 h-[22px] rounded-[3px] border border-[#3f97e8] bg-[#e4f1fc]">
        <svg viewBox="0 0 16 14" className="w-4 h-[14px]" stroke="#4a9be8" fill="none">
          <path d="M.5 1.500h15v11H.5z" fill="#fff" />
          <path d="M0 3h16" strokeWidth="4" />
          <path d="M3 7.500h7M3 9.500h4" />
          <path d="M2 3h3M6 3h2M10 3h3" stroke="#fff" />
        </svg>
      </button>
    </div>
    <ul className="pt-[2px]">
      {tree.map((node) => (
        <li key={node.label}>
          <div className="flex items-center h-6 pl-[3px] gap-1">
            <Icon name={node.children ? 'folderOpen' : 'folder'} />
            <span>{node.label}</span>
            {node.vip && (
              <span className="w-[30px] h-[10px] leading-[10px] bg-[#ffd865] text-[#b98d30] text-[9px] text-center font-bold font-['Liberation_Serif',serif]">
                VIP
              </span>
            )}
          </div>
          {node.children && (
            <ul>
              {node.children.map((child) => (
                <li key={child.label} className="flex items-center h-6 pl-10">
                  <span
                    className={clsx('flex items-center h-[21px] pl-[3px] pr-[9px] gap-[6px]', child.label === '板受力筋(S)' && 'bg-[#c9daf1]')}
                  >
                    <Icon name={child.icon!} />
                    {child.label}
                  </span>
                </li>
              ))}
            </ul>
          )}
        </li>
      ))}
    </ul>
  </aside>
);

const PanelTabs = ({ tabs }: { tabs: string[] }) => (
  <div className="flex h-[22px] shrink-0 bg-[#efefef]">
    {tabs.map((tab, i) => (
      <button
        key={tab}
        type="button"
        className={clsx('px-2 leading-[22px] border-r border-[#c9c9c9]', i === 0 ? 'font-bold text-[#333]' : 'bg-[#e0e0e0] text-[#888]')}
      >
        {tab}
      </button>
    ))}
  </div>
);

const listTools: Tool[] = [
  { icon: 'create', label: '新建', caret: true },
  { icon: 'docCopy', label: '复制' },
  { icon: 'docDelete', label: '删除' },
  { icon: 'layerCopy', label: '层间复制' },
  { icon: 'store', label: '存档' },
];

const ComponentList = () => (
  <section className="flex flex-col flex-1 min-h-0 border border-t-0 border-[#a9acb0] bg-white">
    <CloseBar />
    <PanelTabs tabs={['构件列表', '图纸管理']} />
    <div className="flex items-center h-[29px] pl-[5px] pr-[2px] gap-2 bg-[#efefef] border-y border-[#c9c9c9] text-[#333]">
      {listTools.map(({ icon, label, caret }) => (
        <button key={label} type="button" className="flex items-center gap-[3px]">
          <Icon name={icon} />
          <span>{label}</span>
          {caret && <Caret className="ml-[3px] text-[#555]" />}
        </button>
      ))}
      <svg viewBox="0 0 8 6" className="w-2 h-[6px] ml-auto" fill="#222">
        <path d="M0 0l4 3-4 3zM4 0l4 3-4 3z" />
      </svg>
    </div>
    <label className="flex items-center h-[19px] pl-[2px] pr-2 border-b border-[#b9bcc0]">
      <input aria-label="搜索构件" placeholder="搜索构件..." className="flex-1 outline-none placeholder:text-[#888]" />
      <Icon name="search" className="w-3 h-3 text-[#2f86d0]" />
    </label>
    <div className="flex items-center h-6 mt-[2px] pl-[10px] gap-[6px]">
      <svg viewBox="0 0 7 7" className="w-[7px] h-[7px]"><path d="M7 0v7H0z" fill="#333" /></svg>
      板受力筋
    </div>
    <div className="flex items-center h-6 pl-10">
      <span className="h-[21px] leading-[21px] px-1 bg-[#aecbee]">C8-150</span>
    </div>
  </section>
);

interface PropRow {
  no: number;
  name: string;
  value?: string;
  key?: boolean;
  check?: boolean;
  expand?: boolean;
  rebar?: boolean;
}

const propRows: PropRow[] = [
  { no: 1, name: '名称', value: 'C8-150', key: true },
  { no: 2, name: '类别', value: '底筋', check: true },
  { no: 3, name: '钢筋信息', value: '8@150', key: true, check: true, rebar: true },
  { no: 4, name: '左弯折(mm)', value: '(0)', check: true },
  { no: 5, name: '右弯折(mm)', value: '(0)', check: true },
  { no: 6, name: '备注', check: true },
  { no: 7, name: '钢筋业务属性', expand: true },
  { no: 16, name: '显示样式', expand: true },
];

const PropertyPanel = () => (
  <section className="h-[223px] shrink-0 overflow-hidden border-x border-[#a9acb0] bg-white">
    <CloseBar />
    <PanelTabs tabs={['属性列表', '图层管理']} />
    <table className="w-full table-fixed border-collapse">
      <colgroup>
        <col className="w-[21px]" />
        <col className="w-[101px]" />
        <col />
        <col className="w-[43px]" />
      </colgroup>
      <thead>
        <tr className="h-[21px] bg-[#efefef] text-[#444]">
          <th className="border border-[#c9c9c9] border-l-0" />
          <th className="border border-[#c9c9c9] p-0 font-normal">属性名称</th>
          <th className="border border-[#c9c9c9] p-0 font-normal">属性值</th>
          <th className="border border-[#c9c9c9] p-0 font-normal">附加</th>
        </tr>
      </thead>
      <tbody>
        {propRows.map((row) => (
          <tr key={row.no} className="h-[21px]">
            <td className="border border-l-0 border-[#c9c9c9] bg-[#efefef] p-0 text-center text-[#444]">{row.no}</td>
            <td className={clsx('border border-[#c9c9c9] py-0 pl-[3px] pr-0 whitespace-nowrap', row.key && 'text-[#2459d6]')}>
              {row.expand ? (
                <span className="flex items-center gap-[6px]">
                  <button type="button" aria-label="展开" className="grid place-items-center w-3 h-3 border border-[#777] rounded-[2px]">
                    <svg viewBox="0 0 6 6" className="w-[6px] h-[6px]" stroke="#333"><path d="M3 0v6M0 3h6" /></svg>
                  </button>
                  {row.name}
                </span>
              ) : (
                row.name
              )}
            </td>
            <td className={clsx('border border-[#c9c9c9] py-0 pl-[3px] pr-0', row.expand && 'bg-[#eaeaea]')}>
              <span className="flex items-center">
                {row.rebar && (
                  <svg viewBox="0 0 11 11" className="w-[11px] h-[11px] mb-1 ml-px" fill="none" stroke="#111">
                    <ellipse cx="5.500" cy="4.500" rx="4" ry="2.500" />
                    <path d="M4.500 0v9M6.500 0v9M2 9.500h7" />
                  </svg>
                )}
                {row.value}
              </span>
            </td>
            <td className="border border-[#c9c9c9] p-0">
              {row.check && (
                <input
                  type="checkbox"
                  aria-label={`附加 ${row.name}`}
                  className="appearance-none block mx-auto w-[14px] h-[14px] border border-[#888] rounded-[3px] bg-white"
                />
              )}
            </td>
          </tr>
        ))}
      </tbody>
    </table>
  </section>
);

const Canvas = () => (
  <svg viewBox="0 0 1986 1050" preserveAspectRatio="xMidYMid slice" className="absolute inset-0 w-full h-full">
    <rect x="363.500" y="355.500" width="1196" height="409" fill="#0052ae" stroke="#0000e6" strokeWidth="3" />
    <g fill="none" strokeWidth="3">
      <path d="M761.500 357v406M362 628.500h1198" stroke="#f2f436" />
      <path d="M1160.500 357v406M365 491.500h1193" stroke="#dd40ee" />
    </g>
    <g stroke="#cc1424" fill="none">
      <path d="M402.500 0v354M1205.500 0v354M24 798.500h1938" />
      <path d="M402.500 357v406M1205.500 357v406" stroke="#7c2c68" />
      <path d="M402.500 766v284M1205.500 766v284" />
    </g>
    <g fill="none" stroke="#0c7a1c">
      <circle cx="402.500" cy="12" r="11.500" />
      <circle cx="1205.500" cy="12" r="11.500" />
      <circle cx="12" cy="799" r="11.500" />
      <circle cx="1974.500" cy="799" r="11.500" />
    </g>
    <g fill="#fff" textAnchor="middle" fontSize="17">
      <text x="402" y="18">8</text>
      <text x="1205" y="18">10</text>
      <text x="13" y="805">J</text>
      <text x="1976" y="805">J</text>
    </g>
  </svg>
);

const cubeLines = 'M1.500 7.500h17v15h-17zM1.500 7.500l5-5h17l-5 5M23.500 2.500v15l-5 5';

const ViewTools = () => (
  <div className="absolute right-0 top-px flex flex-col items-center w-8 h-[226px] pt-[7px] bg-[#8f959c] border border-[#a7abb0] text-[#333]">
    <button type="button" aria-label="动态观察">
      <svg viewBox="0 0 25 25" className="block w-[25px] h-[25px]" stroke="#3b4654">
        <circle cx="12" cy="13" r="9" fill="#b9c6d2" />
        <circle cx="10" cy="10" r="5" fill="#e6edf3" stroke="none" />
        <path d="M2 19c7 1 16-5 19-13" fill="none" strokeWidth="2" />
        <circle cx="20" cy="6" r="3.500" fill="#dfe6ec" />
        <circle cx="3" cy="19" r="2" fill="#7c8894" />
      </svg>
    </button>
    <button type="button" aria-label="三维" className="mt-[5px]">
      <svg viewBox="0 0 25 25" className="block w-[25px] h-[25px]" fill="#76879a" stroke="#29323d">
        <path d={cubeLines} />
        <text x="7" y="20" fontSize="9" fill="#111" stroke="none">3D</text>
      </svg>
    </button>
    <button type="button" aria-label="俯视" className="mt-[4px]">
      <svg viewBox="0 0 25 25" className="block w-[25px] h-[25px]" fill="#e3f1ff" stroke="#29323d">
        <path d={cubeLines} />
        <path d="M6.500 7.500v10h12M1.500 22.500l5-5" fill="none" />
      </svg>
    </button>
    <Caret className="mt-[4px]" />
    <button type="button" aria-label="实体" className="mt-[5px]">
      <svg viewBox="0 0 25 25" className="block w-[25px] h-[25px]" fill="#8499b2" stroke="#29323d">
        <path d={cubeLines} />
      </svg>
    </button>
    <Caret className="mt-[6px]" />
    <button type="button" aria-label="旋转" className="mt-[4px]">
      <svg viewBox="0 0 25 25" className="block w-[25px] h-[25px]" fill="none" stroke="#3a3f46" strokeWidth="2">
        <path d="M20 20a10 10 0 11.500-12M22 3v6h-6" />
      </svg>
    </button>
    <Caret className="mt-[5px]" />
    <span className="w-6 h-px mt-[6px] shrink-0 bg-[#555]" />
    <button type="button" aria-label="显示设置" className="mt-1">
      <svg viewBox="0 0 25 25" className="block w-[25px] h-[25px]" fill="#8396ab" stroke="#29323d">
        <path d="M1.500 4.500h22v18h-22zM1.500 4.500l2-2h18l2 2M4 9.500h3v2H4zM4 13.500h3v2H4zM4 17.500h3v2H4zM9 10.500h3M9 14.500h3M9 18.500h3M14 9.500h3v2h-3zM14 13.500h3v2h-3zM14 17.500h3v2h-3zM19 10.500h3M19 14.500h3M19 18.500h3" />
      </svg>
    </button>
  </div>
);

const App: React.FC = () => {
  return (
    <div className="flex flex-col h-screen overflow-hidden bg-white text-black text-[12px] leading-[18px] font-['Noto_Sans','Noto_Sans_CJK_SC',sans-serif]">
      <Header />
      <Ribbon />
      <SelectorBar />
      <main className="flex flex-1 min-h-0">
        <NavTree />
        <div className="flex flex-col w-[354px] ml-1 gap-[5px] shrink-0">
          <ComponentList />
          <PropertyPanel />
        </div>
        {/* Splitter */}
        <div className="w-1 shrink-0">
          <button type="button" aria-label="收起面板" className="grid place-items-center w-1 h-[100px] mt-[553px] bg-[#626878]">
            <svg viewBox="0 0 4 6" className="w-1 h-[6px]" fill="#d5d8de"><path d="M4 0v6L0 3z" /></svg>
          </button>
        </div>
        <div className="relative flex-1 bg-black">
          <Canvas />
          <ViewTools />
        </div>
      </main>
    </div>
  );
};

export default App;
